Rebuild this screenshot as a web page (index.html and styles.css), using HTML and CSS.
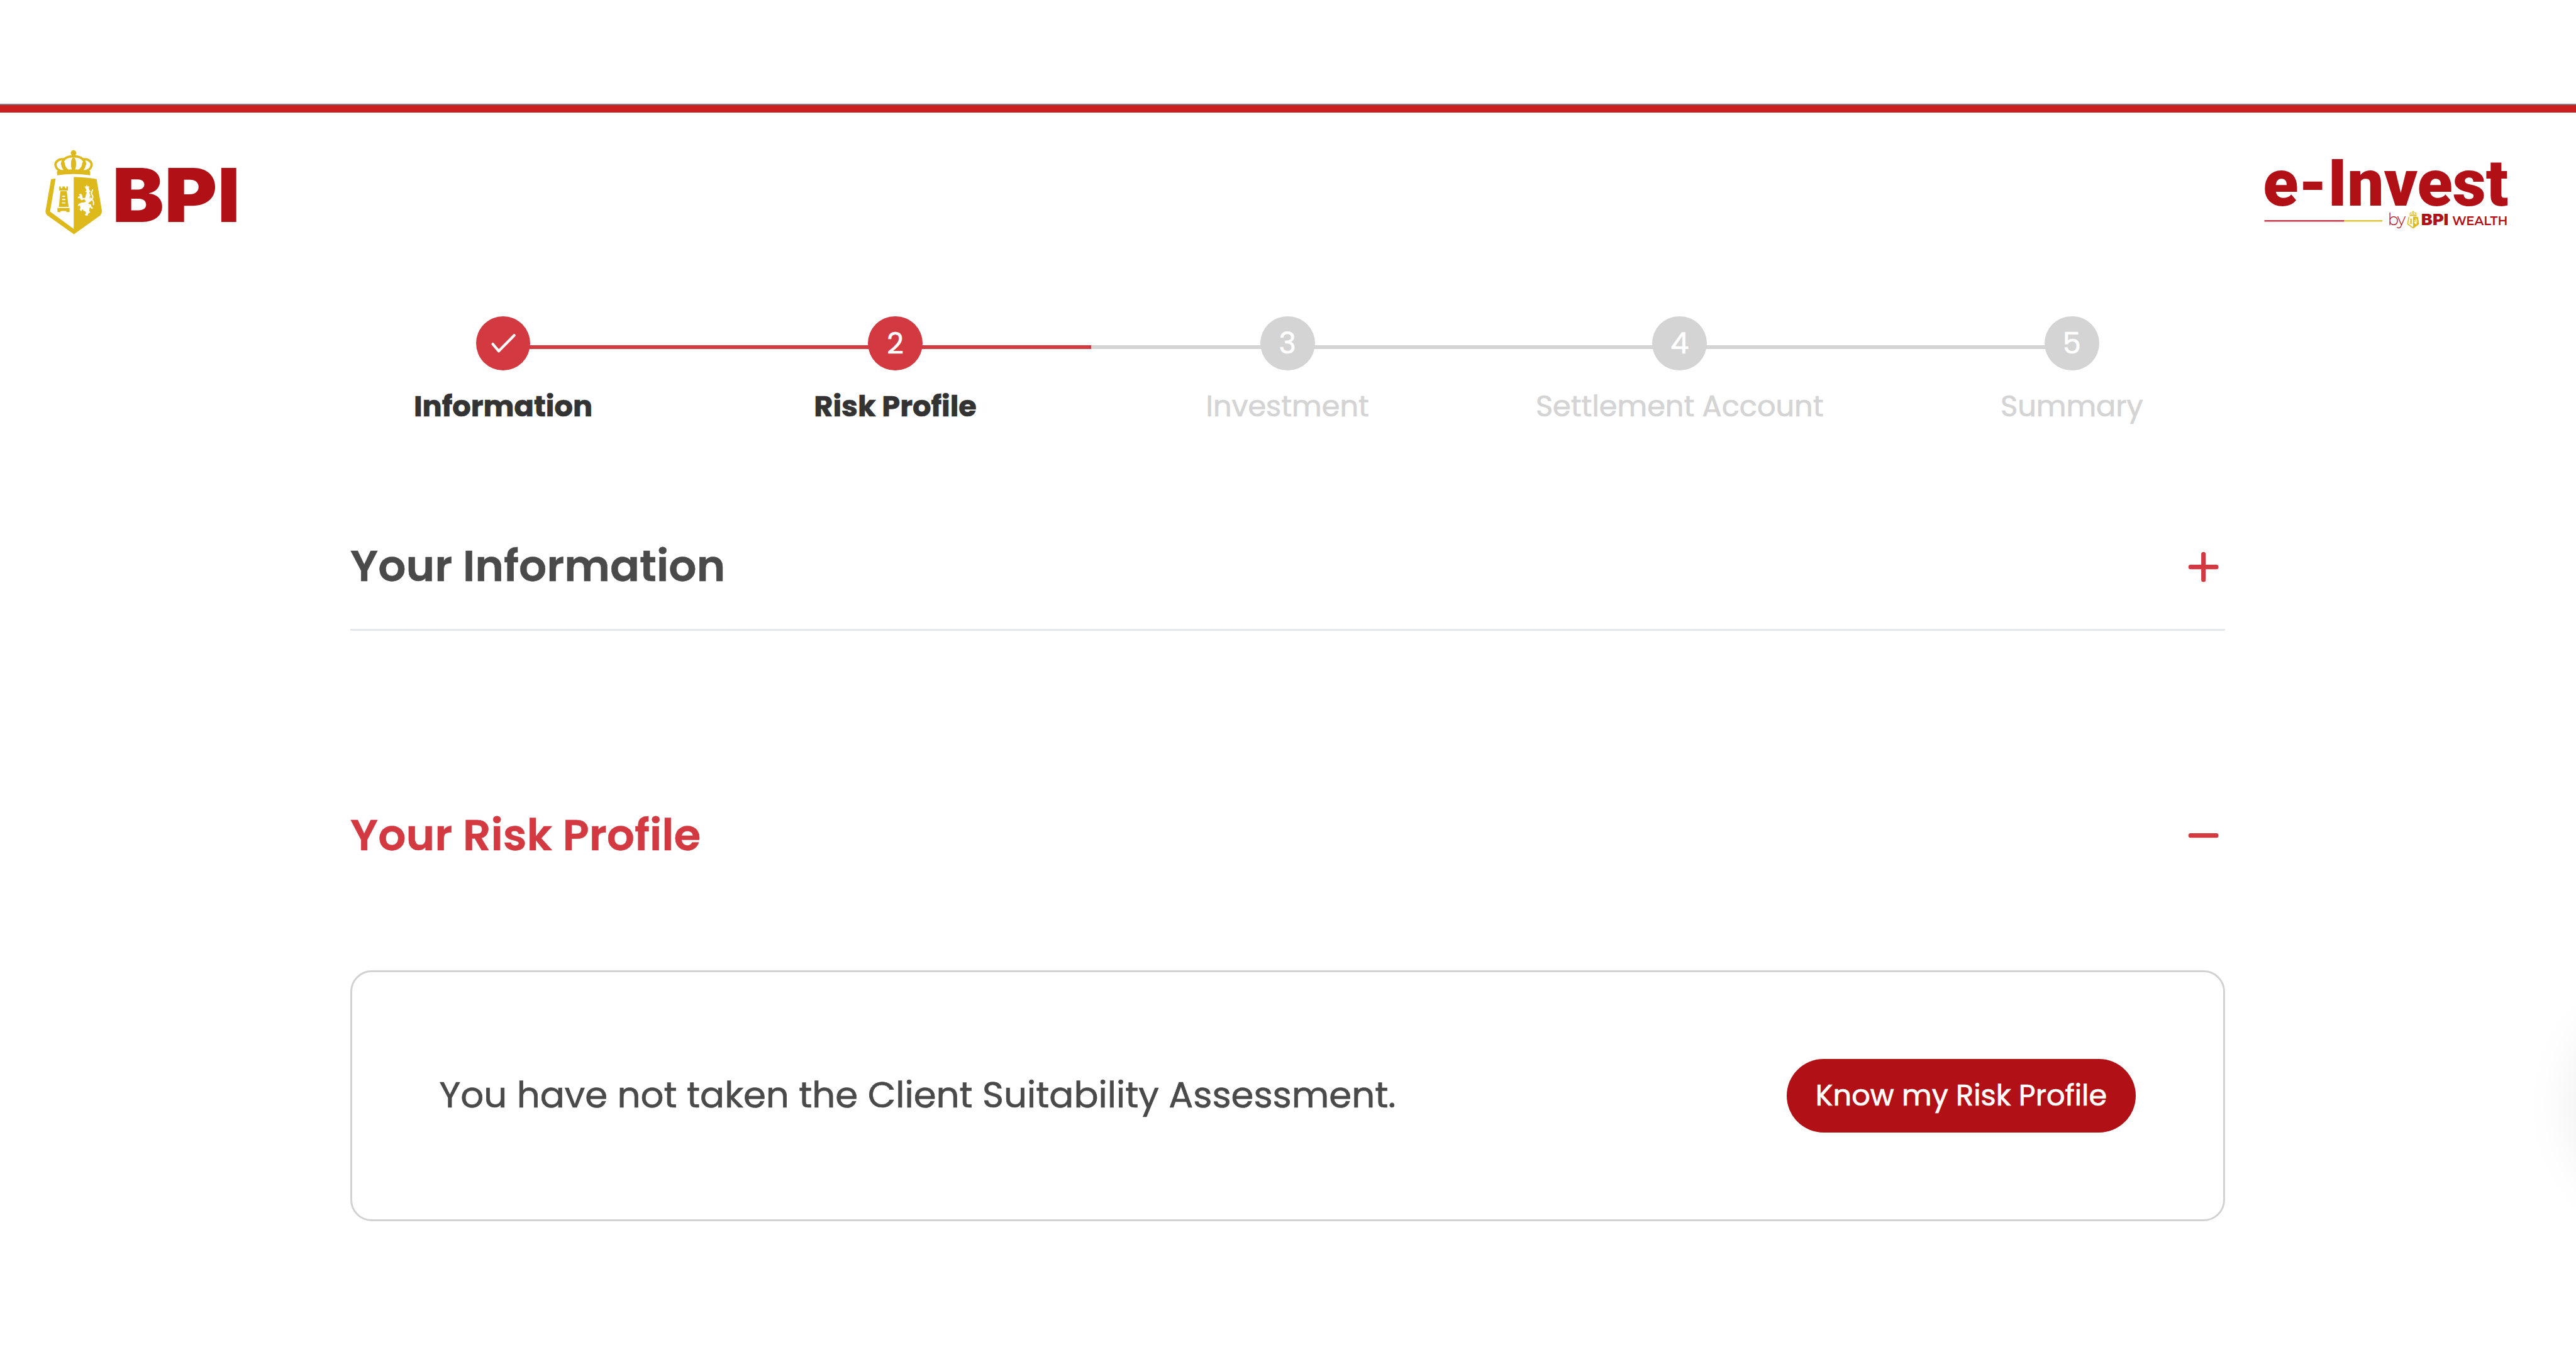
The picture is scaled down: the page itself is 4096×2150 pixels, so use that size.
FILE: index.html
```html
<!DOCTYPE html>
<html lang="en">
<head>
<meta charset="utf-8">
<title>BPI e-Invest</title>
<link rel="stylesheet" href="styles.css">
</head>
<body>
<div class="topline"></div>
<header class="masthead">
  <svg class="logo-bpi" viewBox="70 250 335 146" role="img" aria-label="BPI">
    <defs>
      <symbol id="crest" viewBox="78 274 290 428">
        <g fill="#deb91c">
          <circle cx="221" cy="290" r="14"/>
          <path d="M139 402 L137 384 Q142 377 149 378 Q221 366 293 378 Q301 377 305 384 L305 402 Q221 389 139 402Z"/>
          <ellipse cx="221" cy="346" rx="13" ry="34"/>
        </g>
        <g fill="none" stroke="#deb91c" stroke-linecap="round">
          <path stroke-width="12" d="M174 322 C142 318 127 338 131 354 C134 370 146 377 158 381M268 322 C300 318 315 338 311 354 C308 370 296 377 284 381"/>
          <path stroke-width="12" d="M163 345 C167 318 187 307 221 307 C255 307 275 318 279 345"/>
          <path stroke-width="19" d="M168 343 C168 358 176 370 188 380M274 343 C274 358 266 370 254 380"/>
        </g>
        <path fill="#deb91c" d="M108 422 L131 418 L103 585 L222 672 L222 411 Q285 412 337 421 L364 582 Q364 596 356 604 L223 699 L89 604 Q80 596 80 582Z"/>
        <path fill="#deb91c" d="M149 458h8v9h8v-9h12v9h8v-9h8v21h-44ZM155 482h32l9 79h-49ZM140 567h61v20h-16v-5h-29v5h-16Z"/>
        <path stroke="#fff" stroke-width="6" stroke-linecap="round" d="M166 508h10M166 524h12M165 541h13"/>
        <path fill="#fff" d="M276 455l7 5 5-10 5 10 8-4-3 12 4 10 6 6-8 4 6 16-5 12 9 10-10 10-5 9 14 4 2 10 10 10-10 1-8-8-3 17 5 10-9 5-5 12-13-4 6-10-4-9-9-2-2-10-9-3 4 9-5 6-8-10 7-8 2-14-12 5-6 1 4-10 14-7 17-2 7-5-9-10-15 5-8-11-10 1 3-9 10-1-7-9 10-4 7 9 2 14 13-3 3-13 5-14-9-3 7-7Z"/>
        <path fill="none" stroke="#fff" stroke-width="6" stroke-linecap="round" d="M300 535 C319 520 323 511 313 499 C307 490 314 484 317 476M307 517 C318 528 325 534 321 550M257 550 C255 574 270 574 279 573"/>
      </symbol>
    </defs>
    <use href="#crest" x="76" y="251.3" width="96.7" height="142.7"/>
    <g class="bpi-word">
      <text transform="translate(189 372.700) scale(1.038 1)">B</text>
      <text transform="translate(276.200 372.700) scale(1.080 1)">P</text>
      <text transform="translate(365.500 372.700) scale(1.020 1)">I</text>
    </g>
  </svg>
  <svg class="logo-invest" viewBox="3790 260 430 125" role="img" aria-label="e-Invest by BPI Wealth">
    <text class="invest-word" x="3796.500" y="344" textLength="411.500">e-Invest</text>
    <path stroke="#c23a48" stroke-width="2.6" d="M3799 370H3933"/>
    <path stroke="#e0c441" stroke-width="2.6" d="M3933 370H3997"/>
    <text class="by-word" x="4006" y="377.500" textLength="30">by</text>
    <use href="#crest" x="4038" y="353" width="21" height="30"/>
    <text class="bpi-small" x="4062" y="377.500" textLength="46" lengthAdjust="spacingAndGlyphs">BPI</text>
    <text class="wealth-word" x="4114" y="377.500" textLength="93" lengthAdjust="spacingAndGlyphs">WEALTH</text>
  </svg>
</header>

<ol class="stepper">
  <li class="step done">
    <span class="dot"><svg viewBox="0 0 91.5 91.5"><path d="M28 46.5L38 58.3L64 32"/></svg></span>
    <span class="label">Information</span>
  </li>
  <li class="step current"><span class="dot">2</span><span class="label">Risk Profile</span></li>
  <li class="step"><span class="dot">3</span><span class="label">Investment</span></li>
  <li class="step"><span class="dot">4</span><span class="label">Settlement Account</span></li>
  <li class="step"><span class="dot">5</span><span class="label">Summary</span></li>
</ol>

<main class="content">
  <section class="panel closed">
    <h2>Your Information</h2>
    <svg class="toggle" viewBox="0 0 52 52"><path d="M26 4.500v43M4.500 26h43"/></svg>
  </section>
  <section class="panel open">
    <h2>Your Risk Profile</h2>
    <svg class="toggle" viewBox="0 0 52 52"><path d="M4.500 26h43"/></svg>
  </section>
  <div class="card">
    <p>You have not taken the Client Suitability Assessment.</p>
    <button class="cta" type="button">Know my Risk Profile</button>
  </div>
</main>
<div class="edge-shadow"></div>
</body>
</html>
```
FILE: styles.css
```css
* { box-sizing: border-box; }

body {
  display: flow-root;
  margin: 0;
  height: 2150px;
  overflow: hidden;
  background: #fff;
  color: #4a4a4a;
  font-family: Poppins, Inter, "Open Sans", sans-serif;
}

.topline {
  height: 14px;
  margin-top: 164.500px;
  background: linear-gradient(#78858a 2px, #c91f1f 2px);
}

.masthead {
  display: flex;
  justify-content: space-between;
  align-items: flex-start;
  height: 324px;
  padding: 58.500px 96.300px 0 66.400px;
}

.masthead svg { overflow: visible; }
.logo-bpi { width: 317.600px; height: 138.400px; }
.logo-invest { width: 407.700px; height: 118.500px; margin-top: 9.500px; }

.masthead text { fill: #b11116; }
.bpi-word { font: 900 124.700px Inter, sans-serif; }
.invest-word { font: 900 109px Roboto, sans-serif; }
.by-word { font: 300 27px Montserrat, Lato, sans-serif; }
.bpi-small { font: 900 25.700px Inter, sans-serif; }
.wealth-word { font: 600 20.800px Montserrat, Inter, sans-serif; }

.stepper {
  display: grid;
  grid-template-columns: repeat(5, 623.600px);
  width: 3118px;
  margin: 0 0 0 488.200px;
  padding: 0;
  list-style: none;
  -webkit-text-stroke: .7px currentColor;
}

.step {
  display: flex;
  flex-direction: column;
  align-items: center;
  gap: 27px;
  color: #d4d4d4;
  background: linear-gradient(#d4d4d4, #d4d4d4) 0 46px / 100% 6px no-repeat;
}

.step:first-child { background-position: 311.800px 46px; }
.step:last-child { background-size: 50% 6px; }
.step.done,
.step.current { background-image: linear-gradient(#d33940, #d33940); }

.dot {
  display: flex;
  align-items: center;
  justify-content: center;
  width: 86.800px;
  height: 86.800px;
  border-radius: 50%;
  background: #d4d4d4;
  color: #fff;
  font-size: 46.260px;
}

.dot svg { width: 100%; height: 100%; }
.dot path { fill: none; stroke: #fff; stroke-width: 4.500; stroke-linecap: round; stroke-linejoin: round; }

.done .dot,
.current .dot { background: #d33940; }

.label { font-size: 46.260px; line-height: 60px; white-space: nowrap; }
.done .label,
.current .label { color: #333; font-weight: 700; }

.content { width: 2980.600px; margin: 174px 0 0 557.100px; }

.panel { display: flex; align-items: center; justify-content: space-between; height: 100px; padding-right: 9px; }
.panel.closed { height: 152.500px; padding-bottom: 49.500px; border-bottom: 3px solid #e5e7eb; }
.panel.open { margin-top: 275px; color: #d33940; }

h2 { margin: 0; font-size: 69.400px; font-weight: 600; line-height: 100px; white-space: nowrap; -webkit-text-stroke: .5px currentColor; }

.toggle { width: 49.300px; height: 49.300px; margin-top: 2px; }
.toggle path { fill: none; stroke: #d33940; stroke-width: 7.500; stroke-linecap: round; }

.card {
  display: flex;
  align-items: center;
  justify-content: space-between;
  height: 398.300px;
  margin-top: 165.500px;
  padding: 0 138.400px;
  border: 3px solid #d2d2d2;
  border-radius: 34px;
  -webkit-text-stroke: .7px currentColor;
}

.card p { margin: 0; padding-bottom: 3px; font-size: 57.830px; white-space: nowrap; }

.cta {
  width: 555.600px;
  height: 116.300px;
  padding: 0;
  border: 0;
  border-radius: 60px;
  background: #b11116;
  color: #fff;
  font: inherit;
  font-size: 46.260px;
  white-space: nowrap;
}

.edge-shadow {
  position: absolute;
  right: 0;
  top: 1507px;
  width: 100px;
  height: 500px;
  background: radial-gradient(circle at 270px 250px, rgba(0, 0, 0, .035) 170px, rgba(0, 0, 0, .014) 200px, rgba(0, 0, 0, .005) 225px, transparent 252px);
}
```
